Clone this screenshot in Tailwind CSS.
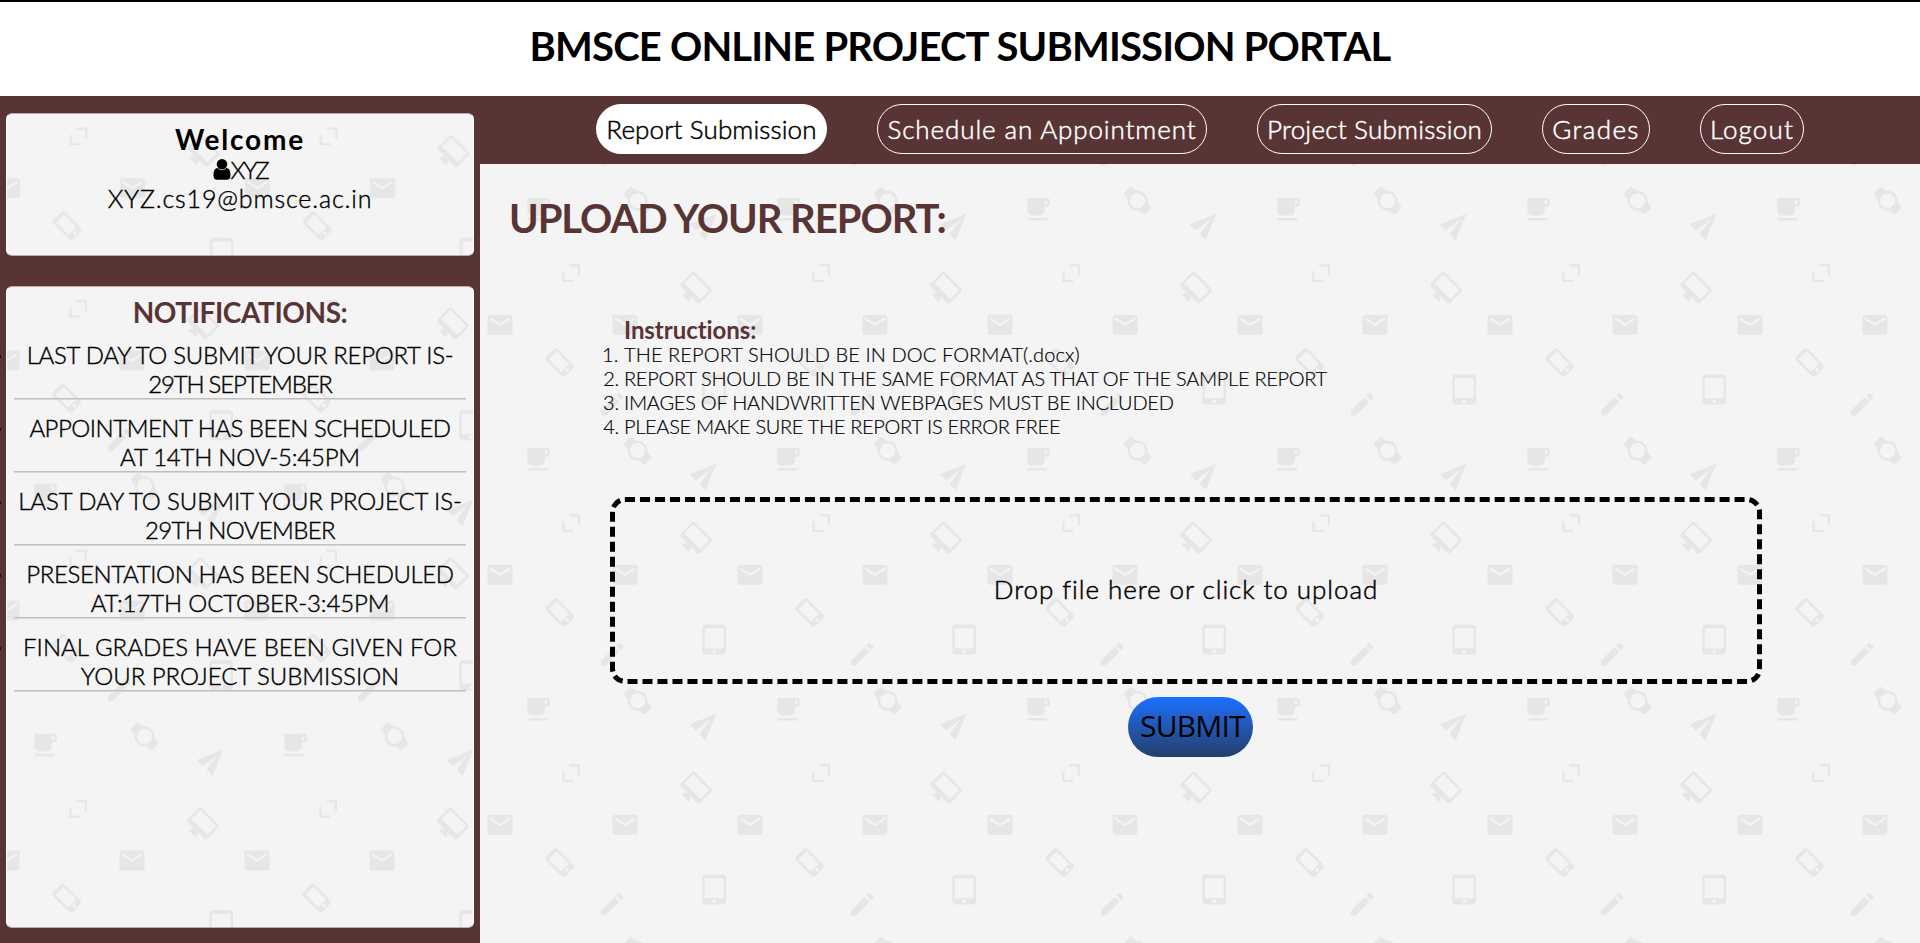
<!DOCTYPE html>
<html lang="en">
<head>
<meta charset="utf-8">
<title>BMSCE Online Project Submission Portal</title>
<script src="https://cdn.jsdelivr.net/npm/@tailwindcss/browser@4"></script>
</head>
<body class="h-[943px] w-[1920px] overflow-hidden bg-[#f4f4f4] font-['Century_Gothic','Lato',sans-serif] text-black">

<!-- shared wallpaper icons -->
<svg class="absolute h-0 w-0" aria-hidden="true">
  <defs>
    <g id="wall" fill="#e6e6e6">
      <path transform="translate(42.3 8.3) scale(1.25)" d="M20 3H4v10c0 2.21 1.79 4 4 4h6c2.21 0 4-1.79 4-4v-3h2c1.11 0 2-.89 2-2V5c0-1.11-.89-2-2-2zm0 5h-2V5h2v3zM4 19h16v2H4z"/>
      <path transform="translate(157.6 14.7) rotate(-45) scale(1.25) translate(-12 -12)" d="M20 12c0-2.54-1.19-4.81-3.04-6.27L16 0H8l-.95 5.73C5.19 7.19 4 9.45 4 12s1.19 4.81 3.05 6.27L8 24h8l.96-5.73C18.81 16.81 20 14.54 20 12zM6 12c0-3.31 2.69-6 6-6s6 2.69 6 6-2.69 6-6 6-6-2.69-6-6z"/>
      <path transform="translate(226.6 37.4) rotate(-45) scale(1.25) translate(-12 -12)" d="M2.01 21L23 12 2.01 3 2 10l15 2-15 2z"/>
      <path d="M89.3 78.3H100V89.2H97.7V80.6H89.3zM82.3 85.4H84.6V93.7H93.2V96H82.3z"/>
      <path transform="translate(214.2 103.4) rotate(45) scale(1.25) translate(-12 -12)" d="M21 2H3c-1.1 0-2 .9-2 2v12c0 1.1.9 2 2 2h7l-2 3v1h8v-1l-2-3h7c1.1 0 2-.9 2-2V4c0-1.1-.9-2-2-2zm0 12H3V4h18v10z"/>
      <path transform="translate(5 123.7) scale(1.25)" d="M20 4H4c-1.1 0-1.99.9-1.99 2L2 18c0 1.1.9 2 2 2h16c1.1 0 2-.9 2-2V6c0-1.1-.9-2-2-2zm0 4l-8 5-8-5V6l8 5 8-5v2z"/>
      <path transform="translate(130 123.7) scale(1.25)" d="M20 4H4c-1.1 0-1.99.9-1.99 2L2 18c0 1.1.9 2 2 2h16c1.1 0 2-.9 2-2V6c0-1.1-.9-2-2-2zm0 4l-8 5-8-5V6l8 5 8-5v2z"/>
      <path transform="translate(79.7 176.4) rotate(-45) scale(1.25) translate(-11.5 -12)" d="M15.5 1h-8C6.12 1 5 2.12 5 3.5v17C5 21.88 6.12 23 7.5 23h8c1.38 0 2.5-1.12 2.5-2.5v-17C18 2.12 16.88 1 15.5 1zm-4 21c-.83 0-1.5-.67-1.5-1.5s.67-1.5 1.5-1.5 1.5.67 1.5 1.5-.67 1.5-1.5 1.5zm4.5-4H7V4h9v14z"/>
      <path transform="translate(219.8 188.4) scale(1.25)" d="M18.5 0h-14C3.12 0 2 1.12 2 2.5v19C2 22.88 3.12 24 4.5 24h14c1.38 0 2.5-1.12 2.5-2.5v-19C21 1.12 19.88 0 18.5 0zm-7 23c-.83 0-1.5-.67-1.5-1.5s.67-1.5 1.5-1.5 1.5.67 1.5 1.5-.67 1.5-1.5 1.5zm7.5-4H4V3h15v16z"/>
      <path transform="translate(117.2 203.2) scale(1.25)" d="M3 17.25V21h3.75L17.81 9.94l-3.75-3.75L3 17.25zM20.71 7.04c.39-.39.39-1.02 0-1.41l-2.34-2.34c-.39-.39-1.02-.39-1.41 0l-1.83 1.83 3.75 3.75 1.83-1.83z"/>
    </g>
    <pattern id="wall-main" width="250" height="250" patternUnits="userSpaceOnUse" x="0" y="22"><use href="#wall"/></pattern>
    <pattern id="wall-user" width="250" height="250" patternUnits="userSpaceOnUse" x="-19.5" y="-64.7"><use href="#wall"/></pattern>
    <pattern id="wall-notes" width="250" height="250" patternUnits="userSpaceOnUse" x="-20" y="-65.3"><use href="#wall"/></pattern>
  </defs>
</svg>

<header class="h-24 border-t-2 border-black bg-white pt-5 text-center">
  <h1 class="whitespace-nowrap text-[40px] leading-[48px] font-bold tracking-[-0.83px]">BMSCE ONLINE PROJECT SUBMISSION PORTAL</h1>
</header>

<div class="flex h-[847px]">
  <aside class="flex w-[480px] flex-col bg-[#593434] px-1.5 pt-[17px] text-center text-2xl leading-[29px]">
    <section class="relative isolate h-[143px] overflow-hidden rounded-md border border-x-white border-y-[#b9abab] bg-[#f4f4f4] pt-[9px]">
      <svg class="absolute inset-0 -z-10 h-full w-full"><rect width="100%" height="100%" fill="url(#wall-user)"/></svg>
      <h2 class="text-[28px] leading-[33px] font-bold tracking-[1.77px]">Welcome</h2>
      <p class="-mt-px flex items-center justify-center font-light tracking-[-2.2px] [-webkit-text-stroke:0.4px_black]">
        <svg class="h-[21px] w-[18px]" viewBox="0 0 18 21"><path d="M9 0a5.3 5.3 0 0 1 0 10.6A5.3 5.3 0 0 1 9 0zM4.6 9.1C6 10.6 7.300 11.300 9 11.300s3-.7 4.400-2.200c3.100.2 4.100 3.400 4.100 7.400 0 2.800-1.300 4.300-3.600 4.300H4.100C1.800 20.800.5 19.300.5 16.500c0-4 1-7.200 4.100-7.400z"/></svg><span>XYZ</span>
      </p>
      <p class="text-[25px] font-light tracking-[0.86px] [-webkit-text-stroke:0.4px_black]">XYZ.cs19@bmsce.ac.in</p>
    </section>

    <section class="relative isolate mt-[30px] h-[642px] rounded-md border border-x-white border-y-[#b9abab] bg-[#f4f4f4] px-[7px] pt-2">
      <svg class="absolute inset-0 -z-10 h-full w-full rounded-md"><rect width="100%" height="100%" fill="url(#wall-notes)"/></svg>
      <h2 class="text-[28px] leading-[34px] font-bold tracking-[-0.42px] text-[#593434]">NOTIFICATIONS:</h2>
      <ul class="-mt-[2px] font-light whitespace-nowrap [-webkit-text-stroke:0.4px_black]">
        <li class="relative pt-[13px]"><i class="absolute top-[28px] -left-[14px] h-[3px] w-px bg-black/70"></i><p class="tracking-[-0.28px]">LAST DAY TO SUBMIT YOUR REPORT IS-</p><p class="tracking-[-1.2px]">29TH SEPTEMBER</p><div class="h-[2px] border-y border-t-[#c0c0c0] border-b-[#d8d8d8]"></div></li>
        <li class="relative pt-[13px]"><i class="absolute top-[28px] -left-[14px] h-[3px] w-px bg-black/70"></i><p class="tracking-[-0.5px]">APPOINTMENT HAS BEEN SCHEDULED</p><p class="tracking-[-0.23px]">AT 14TH NOV-5:45PM</p><div class="h-[2px] border-y border-t-[#c0c0c0] border-b-[#d8d8d8]"></div></li>
        <li class="relative pt-[13px]"><i class="absolute top-[28px] -left-[14px] h-[3px] w-px bg-black/70"></i><p class="tracking-[-0.1px]">LAST DAY TO SUBMIT YOUR PROJECT IS-</p><p class="tracking-[-0.64px]">29TH NOVEMBER</p><div class="h-[2px] border-y border-t-[#c0c0c0] border-b-[#d8d8d8]"></div></li>
        <li class="relative pt-[13px]"><i class="absolute top-[28px] -left-[14px] h-[3px] w-px bg-black/70"></i><p class="tracking-[-0.38px]">PRESENTATION HAS BEEN SCHEDULED</p><p class="tracking-[-0.13px]">AT:17TH OCTOBER-3:45PM</p><div class="h-[2px] border-y border-t-[#c0c0c0] border-b-[#d8d8d8]"></div></li>
        <li class="relative pt-[13px]"><i class="absolute top-[28px] -left-[14px] h-[3px] w-px bg-black/70"></i><p class="tracking-[0.04px]">FINAL GRADES HAVE BEEN GIVEN FOR</p><p class="tracking-[-0.04px]">YOUR PROJECT SUBMISSION</p><div class="h-[2px] border-y border-t-[#c0c0c0] border-b-[#d8d8d8]"></div></li>
      </ul>
    </section>
  </aside>

  <div class="flex w-[1440px] flex-col">
    <nav class="flex h-[68px] gap-[50px] bg-[#593434] pt-2 pl-[116px] text-[26px] font-light whitespace-nowrap text-white [-webkit-text-stroke:0.5px_currentColor]">
      <a class="flex h-[50px] w-[231px] items-center justify-center rounded-[25px] border border-white bg-white tracking-[0.13px] text-black">Report Submission</a>
      <a class="flex h-[50px] w-[330px] items-center justify-center rounded-[25px] border border-white tracking-[0.89px]">Schedule an Appointment</a>
      <a class="flex h-[50px] w-[235px] items-center justify-center rounded-[25px] border border-white tracking-[0.23px]">Project Submission</a>
      <a class="flex h-[50px] w-[108px] items-center justify-center rounded-[25px] border border-white tracking-[1.35px]">Grades</a>
      <a class="flex h-[50px] w-[104px] items-center justify-center rounded-[25px] border border-white tracking-[1.15px]">Logout</a>
    </nav>

    <main class="relative isolate flex-1 pt-[30px]">
      <svg class="absolute inset-0 -z-10 h-full w-full"><rect width="100%" height="100%" fill="url(#wall-main)"/></svg>
      <h2 class="pl-[29px] text-[40px] leading-[48px] font-bold tracking-[-1.05px] whitespace-nowrap text-[#593434]">UPLOAD YOUR REPORT:</h2>

      <section class="mt-[73px] pl-36 whitespace-nowrap">
        <h3 class="text-2xl leading-[29px] font-bold tracking-[-0.05px] text-[#593434]">Instructions:</h3>
        <ol class="-mt-[2px] list-outside list-decimal text-xl leading-6 font-light [-webkit-text-stroke:0.2px_black]">
          <li class="tracking-[0.1px]">THE REPORT SHOULD BE IN DOC FORMAT(.docx)</li>
          <li class="tracking-[-0.29px]">REPORT SHOULD BE IN THE SAME FORMAT AS THAT OF THE SAMPLE REPORT</li>
          <li class="tracking-[-0.25px]">IMAGES OF HANDWRITTEN WEBPAGES MUST BE INCLUDED</li>
          <li class="tracking-[-0.31px]">PLEASE MAKE SURE THE REPORT IS ERROR FREE</li>
        </ol>
      </section>

      <div class="mt-[59px] ml-[130px] flex h-[187px] w-[1152px] items-center justify-center rounded-[15px] border-5 border-dashed border-black pb-[2px] text-[26px] font-light tracking-[0.93px] [-webkit-text-stroke:0.5px_black]">Drop file here or click to upload</div>

      <button class="mt-[13px] ml-[648px] flex h-[60px] w-[125px] items-center rounded-[30px] bg-linear-to-b from-[#1a70ff] to-[#233e6c] pb-[3px] pl-[12px] font-['Open_Sans',sans-serif] text-[30px] tracking-[-0.81px]">SUBMIT</button>
    </main>
  </div>
</div>
</body>
</html>
